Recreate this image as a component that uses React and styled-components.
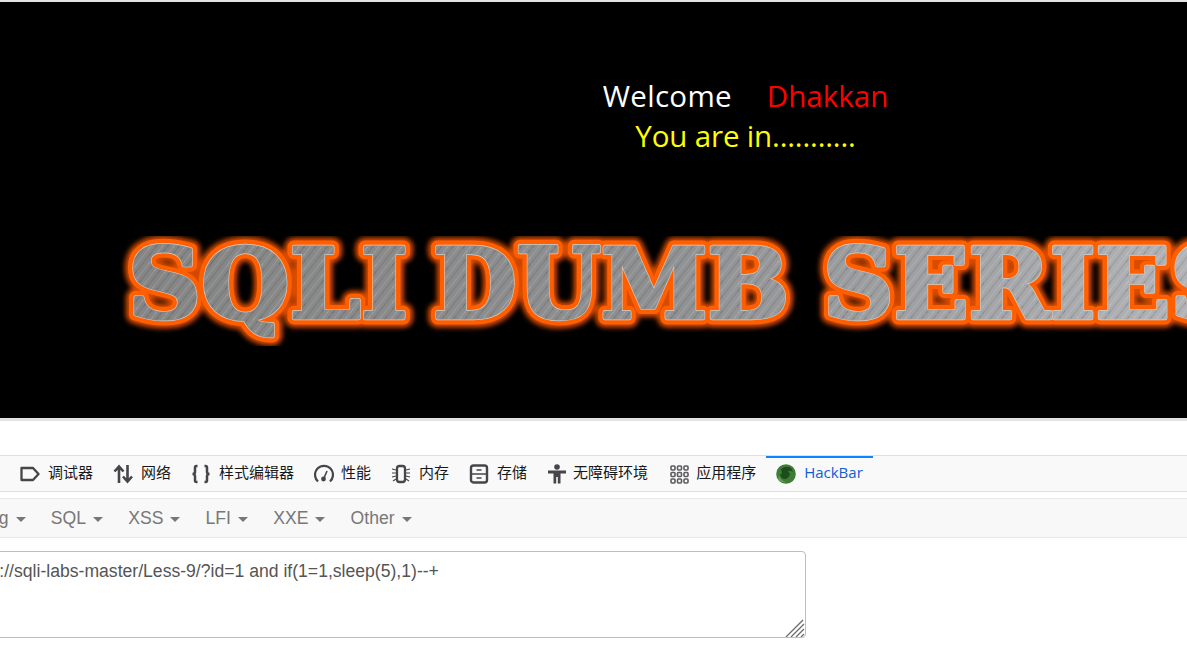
import React from "react";
import styled, { createGlobalStyle } from "styled-components";

const Global = createGlobalStyle`
  html, body { margin: 0; padding: 0; background: #fff; overflow: hidden; }
  body { width: 1187px; height: 669px; }
  #root { width: 1187px; height: 669px; overflow: hidden; }
`;
const Page = styled.div`
  width: 1187px; height: 669px; overflow: hidden; display: flex; flex-direction: column; background: #fff;
`;
const Hero = styled.section`
  flex: none; height: 416px; background: #000; border-top: 2px solid #e4e4e4; overflow: hidden;
  display: flex; flex-direction: column;
`;
const Greeting = styled.div`
  width: 1491px; padding-top: 74px; text-align: center;
  font-family: "Open Sans", "Noto Sans", sans-serif; font-size: 29.5px; line-height: 40px; color: #fff;
`;
const Line = styled.div`
  height: 40px; color: ${p => p.$color || "#fff"}; white-space: pre; letter-spacing: ${p => p.$track || 0}px;
`;
const Hello = styled.span`
  letter-spacing: 0.3px;
`;
const Name = styled.span`
  color: #f00; margin-left: 35px;
`;
const Logo = styled.svg`
  display: block; margin-top: 80px; flex: none;
`;
const Divider = styled.div`
  flex: none; height: 3px; background: #e2e2e2;
`;
const Gap = styled.div`
  flex: none; height: ${p => p.$h}px;
`;
const Tabs = styled.nav`
  flex: none; height: 35px; display: flex; align-items: stretch; background: #f9f9f9;
  border-top: 1px solid #e0e0e2; border-bottom: 1px solid #e0e0e2; overflow: hidden;
`;
const TabList = styled.div`
  display: flex; align-items: stretch; margin-left: -82px;
`;
const Tab = styled.div`
  position: relative; display: flex; align-items: center; gap: ${p => p.$gap ?? 8}px; padding: 0 10px; margin-left: ${p => p.$ml || 0}px;
  font-family: "Noto Sans CJK SC", "Noto Sans", sans-serif; font-size: 15px; line-height: 20px; color: #18181a; white-space: nowrap;
`;
const Label = styled.span`
  display: block; margin-top: -3px;
`;
const ActiveTab = styled(Tab)`
  color: #0a60d8; font-family: "Open Sans", "Noto Sans", sans-serif; width: 107px; box-sizing: border-box;
  &::before { content: ""; position: absolute; left: 0; right: 0; top: -1px; height: 3px; background: #0a84ff; }
`;
const Icon = styled.svg`
  width: 20px; height: 20px; flex: none; display: block;
`;
const Menu = styled.nav`
  flex: none; height: 38px; display: flex; align-items: center; background: #f8f8f8; overflow: hidden;
  border-top: 1px solid #e7e7e7; border-bottom: 1px solid #e7e7e7;
`;
const MenuList = styled.div`
  display: flex; align-items: center; gap: 25.2px; margin-left: -64.8px;
  font-family: "Liberation Sans", Arial, sans-serif; font-size: 17.6px; color: #777;
`;
const MenuItem = styled.div`
  display: flex; align-items: center; gap: 7px; white-space: nowrap;
`;
const Caret = styled.span`
  display: block; width: 0; height: 0; margin-top: 2px;
  border-top: 5px solid #777; border-left: 5px solid transparent; border-right: 5px solid transparent;
`;
const Field = styled.div`
  position: relative; flex: none; width: 849px; height: 87px; margin-left: -43px; box-sizing: border-box;
`;
const Input = styled.textarea`
  display: block; width: 100%; height: 100%; box-sizing: border-box; resize: none; outline: none; overflow: hidden;
  padding: 7px 12px; border: 1px solid #bdbdbd; border-radius: 4px; background: #fff; margin: 0;
  font-family: "Liberation Sans", Arial, sans-serif; font-size: 17.6px; line-height: 24px; color: #555;
`;
const Grip = styled.svg`
  position: absolute; right: 1px; bottom: 1px; width: 20px; height: 18px;
`;

const url = "http://sqli-labs-master/Less-9/?id=1 and if(1=1,sleep(5),1)--+";

const st = { fill: "none", stroke: "#45454a", strokeWidth: 2 };

const face = { fontFamily: "'DejaVu Serif', serif", fontWeight: "bold", fontSize: 97, lengthAdjust: "spacingAndGlyphs", y: 318, strokeLinejoin: "round" };

const LogoText = ({ x, w, children }) => (
  <g>
    <text {...face} x={x} textLength={w} fill="#ff5a00" stroke="#ff5a00" strokeWidth="19" filter="url(#glow)" opacity="0.85">{children}</text>
    <text {...face} x={x} textLength={w} fill="#ff5f00" stroke="#ff5f00" strokeWidth="13">{children}</text>
    <text {...face} x={x} textLength={w} fill="#d9cfc4" stroke="#d9cfc4" strokeWidth="4.4">{children}</text>
    <text {...face} x={x} textLength={w} fill="url(#metal)" stroke="url(#metal)" strokeWidth="3.2">{children}</text>
    <text {...face} x={x} textLength={w} fill="url(#brush)" stroke="url(#brush)" strokeWidth="3.2">{children}</text>
  </g>
);

export default function App() {
  return (
    <Page>
      <Global />
      <Hero>
        <Greeting>
          <Line><Hello>Welcome</Hello><Name>Dhakkan</Name></Line>
          <Line $color="#ff0" $track={-0.15}>You are in...........</Line>
        </Greeting>
        <Logo width="1187" height="110" viewBox="0 236 1187 110" role="img">
          <defs>
            <filter id="glow" x="-10%" y="-30%" width="120%" height="160%"><feGaussianBlur stdDeviation="2.6" /></filter>
            <linearGradient id="metal" gradientUnits="userSpaceOnUse" x1="120" y1="0" x2="1187" y2="0">
              <stop offset="0" stopColor="#858585" />
              <stop offset="0.5" stopColor="#8f9092" />
              <stop offset="1" stopColor="#b2b3b6" />
            </linearGradient>
            <pattern id="brush" width="9" height="9" patternUnits="userSpaceOnUse" patternTransform="rotate(-52)">
              <rect width="9" height="1" fill="#ffffff" opacity="0.12" />
              <rect y="4" width="9" height="1.200" fill="#000000" opacity="0.1" />
            </pattern>
          </defs>
          <LogoText x="128" w="280">SQLI</LogoText>
          <LogoText x="433" w="356">DUMB</LogoText>
          <LogoText x="823" w="418">SERIES</LogoText>
        </Logo>
      </Hero>
      <Divider />
      <Gap $h={34} />
      <Tabs>
        <TabList>
          <Tab $gap={7}><Icon viewBox="0 0 20 20" /><Label>控制台</Label></Tab>
          <Tab>
            <Icon viewBox="0 0 20 20"><path {...st} strokeWidth="2.300" d="M1.500 4h11.500l5.500 6-5.500 6H1.500z" strokeLinejoin="round" /></Icon>
            <Label>调试器</Label>
          </Tab>
          <Tab>
            <Icon viewBox="0 0 20 20"><path {...st} strokeWidth="2.600" d="M6 19V3M1.500 7.500 6 2.500l4.500 5M14.500 1v16M10 12.500l4.500 5 4.500-5" /></Icon>
            <Label>网络</Label>
          </Tab>
          <Tab>
            <Icon viewBox="0 0 20 20"><path {...st} strokeWidth="2.500" d="M6.500 2H5.500Q4 2 4 3.500V8Q4 10 1.500 10 4 10 4 12V16.500Q4 18 5.500 18H6.500M13.500 2H14.500Q16 2 16 3.500V8Q16 10 18.500 10 16 10 16 12V16.500Q16 18 14.500 18H13.500" /></Icon>
            <Label>样式编辑器</Label>
          </Tab>
          <Tab $gap={7}>
            <Icon viewBox="0 0 20 20">
              <path {...st} strokeWidth="2.200" d="M4 17.500A9 9 0 1 1 16 17.500" />
              <circle cx="9.500" cy="15" r="2.400" fill="#45454a" />
              <path {...st} strokeWidth="1.600" d="M10 14l3-7" />
            </Icon>
            <Label>性能</Label>
          </Tab>
          <Tab>
            <Icon viewBox="0 0 20 20">
              <rect {...st} strokeWidth="2.300" x="6" y="2" width="8" height="16" rx="2.500" />
              <path {...st} strokeWidth="1.200" d="M1 5l4 1M1 9h4M1 13l4-1M2 17l3-2M15 6l4-1M15 9h4M15 12l4 1M15 15l3 2" />
            </Icon>
            <Label>内存</Label>
          </Tab>
          <Tab $gap={8} >
            <Icon viewBox="0 0 20 20">
              <rect {...st} strokeWidth="2.400" x="2" y="1.500" width="16" height="17" rx="2.500" />
              <path {...st} d="M2 10h16M7.500 6h5M7.500 14h5" strokeWidth="1.700" />
            </Icon>
            <Label>存储</Label>
          </Tab>
          <Tab $gap={6}>
            <Icon viewBox="0 0 20 20">
              <circle cx="10" cy="3" r="2.800" fill="#45454a" />
              <path fill="#45454a" d="M1 6.500h18v3H13.500V19.500h-2.700v-6.500H9.200v6.500H6.500V9.500H1z" />
            </Icon>
            <Label>无障碍环境</Label>
          </Tab>
          <Tab $gap={7} $ml={1}>
            <Icon viewBox="0 0 20 20">
              {[1.500, 8, 14.500].flatMap(y => [1.500, 8, 14.500].map(x => (
                <rect key={x + "-" + y} x={x + 0.5} y={y + 0.5} width="4" height="4" rx="1" fill="none" stroke="#5b5b60" strokeWidth="1.600" />
              )))}
            </Icon>
            <Label>应用程序</Label>
          </Tab>
          <ActiveTab $gap={8}>
            <Icon viewBox="0 0 20 20">
              <circle cx="10" cy="10" r="9.800" fill="#3f7d35" />
              <path fill="#1e4d1c" d="M5 5q5-4 10-1l2 4q-3-2-5-1l2 3q-1 5-6 5-3-1-4-4l2-2z" />
              <path fill="#66a05a" d="M3 12q2 5 7 6-5 1-8-3z" />
            </Icon>
            <Label>HackBar</Label>
          </ActiveTab>
        </TabList>
      </Tabs>
      <Gap $h={6} />
      <Menu>
        <MenuList>
          {["Encoding", "SQL", "XSS", "LFI", "XXE", "Other"].map(n => (
            <MenuItem key={n}>{n}<Caret /></MenuItem>
          ))}
        </MenuList>
      </Menu>
      <Gap $h={13} />
      <Field>
        <Input defaultValue={url} spellCheck={false} />
        <Grip viewBox="0 0 20 18">
          <path fill="none" stroke="#6a6a6a" strokeWidth="1.300" d="M1 18 18 1M6 18 19 5M11 18l8-8M16 18l3-3" />
        </Grip>
      </Field>
    </Page>
  );
}
